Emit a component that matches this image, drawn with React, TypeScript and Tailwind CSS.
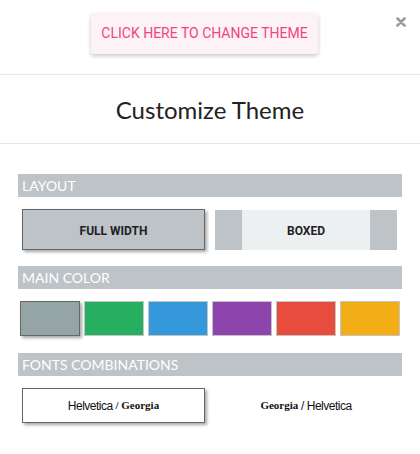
const colors = ["#95a5a6", "#27ae60", "#3498db", "#8e44ad", "#e74c3c", "#f3ad16"];

function SectionBar({ label }: { label: string }) {
  return (
    <div className="flex h-[23px] items-center bg-[#bdc3c7] pl-[4px] font-['Lato'] text-[14px] leading-none text-white">
      {label}
    </div>
  );
}

export default function App() {
  return (
    <div className="h-[454px] w-[420px] bg-white">
      {/* top strip */}
      <div className="relative flex h-[75px] justify-center border-b border-[#e6e6e6] pt-[13px]">
        <button className="ml-[-11px] h-[41px] w-[227px] rounded-[3px] bg-[#fdf2f6] font-['Roboto'] text-[14px] text-[#f2457a] shadow-[0_2px_4px_rgba(0,0,0,0.22)]">
          CLICK HERE TO CHANGE THEME
        </button>
        <svg
          className="absolute right-[14px] top-[17px]"
          width="10"
          height="10"
          viewBox="0 0 10 10"
        >
          <path d="M1.5 1.5 L8.5 8.5 M8.5 1.5 L1.5 8.5" stroke="#9a9a9a" strokeWidth="2.6" strokeLinecap="round" />
        </svg>
      </div>

      {/* title */}
      <div className="flex h-[69px] items-center justify-center border-b border-[#e6e6e6] pt-[2px] font-['Lato'] text-[24px] text-[#222]">
        Customize Theme
      </div>

      <div className="px-[18px] pt-[30px]">
        <SectionBar label="LAYOUT" />
        <div className="mt-[12px] flex gap-[10px] pl-[4px] pr-[5px]">
          <button className="h-[41px] w-[183px] border border-[#666] bg-[#bdc3c7] pt-[2px] font-['Roboto'] text-[12px] font-bold text-[#222] shadow-[2px_2px_3px_rgba(0,0,0,0.35)]">
            FULL WIDTH
          </button>
          <button className="mt-[1px] flex h-[40px] flex-1 bg-[#bdc3c7] px-[27px]">
            <span className="flex h-full flex-1 items-center justify-center pt-[2px] font-['Roboto'] text-[12px] font-bold text-[#222] bg-[#ecf0f1]">
              BOXED
            </span>
          </button>
        </div>

        <div className="mt-[16px]">
          <SectionBar label="MAIN COLOR" />
        </div>
        <div className="mt-[12px] flex gap-[4px] px-[2px]">
          {colors.map((c, i) => (
            <div
              key={c}
              className={
                i === 0
                  ? "h-[35px] w-[60px] border border-[#666] shadow-[2px_2px_3px_rgba(0,0,0,0.35)]"
                  : "h-[35px] w-[60px] border border-[#c4c4c4]"
              }
              style={{ backgroundColor: c }}
            />
          ))}
        </div>

        <div className="mt-[17px]">
          <SectionBar label="FONTS COMBINATIONS" />
        </div>
        <div className="mt-[12px] flex gap-[10px] pl-[4px] pr-[5px]">
          <button className="flex h-[35px] w-[183px] items-center justify-center whitespace-pre border border-[#666] bg-white text-[#111] shadow-[2px_2px_3px_rgba(0,0,0,0.35)]">
            <span className="font-['Liberation_Sans'] text-[12px] tracking-[-0.5px]">Helvetica</span>
            <span className="font-['Liberation_Serif'] text-[11px] font-bold">{" / Georgia"}</span>
          </button>
          <button className="flex h-[35px] flex-1 items-center justify-center whitespace-pre text-[#111]">
            <span className="font-['Liberation_Serif'] text-[11px] font-bold">Georgia</span>
            <span className="font-['Liberation_Sans'] text-[12px] tracking-[-0.5px]">{" / Helvetica"}</span>
          </button>
        </div>
      </div>
    </div>
  );
}
